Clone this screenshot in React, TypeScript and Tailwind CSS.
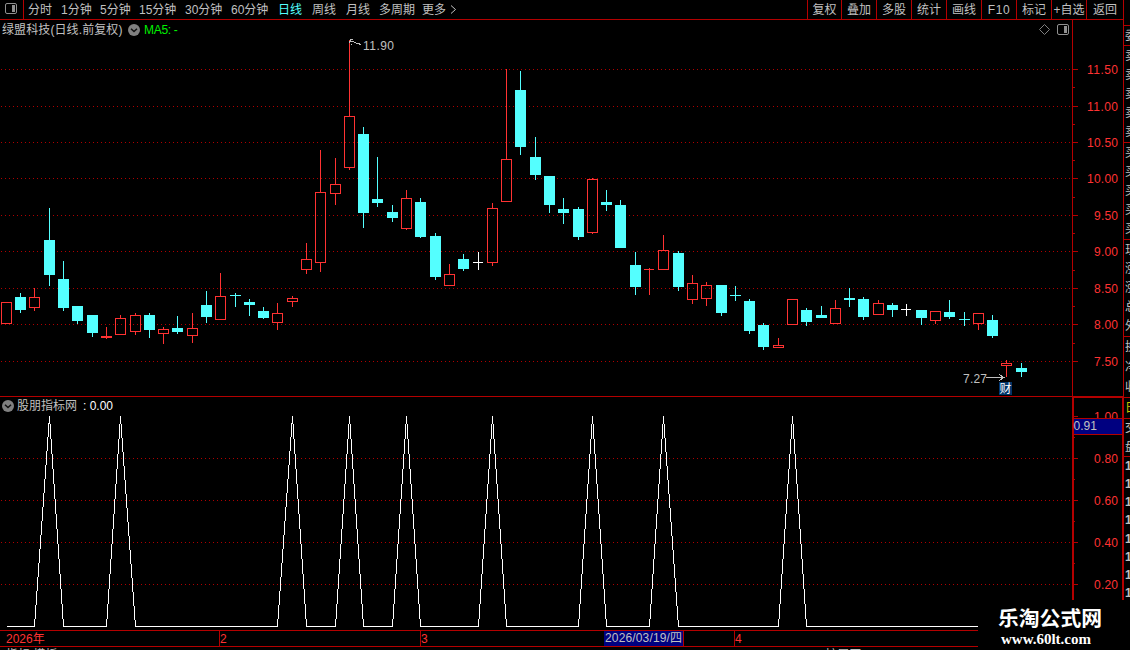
import React from "react";

type Kind = "r" | "c" | "w";
// kind, centre x, high, body top, body bottom, low
type Candle = [Kind, number, number, number, number, number];

const candles: Candle[] = [
  ["r", 6, 302, 302, 324, 324], ["c", 20, 293, 297, 310, 313], ["r", 34, 288, 297, 308, 311],
  ["c", 49, 208, 240, 275, 286], ["c", 63, 261, 279, 308, 311], ["c", 77, 306, 306, 321, 324],
  ["c", 92, 315, 315, 333, 337], ["r", 106, 327, 336, 338, 339], ["r", 120, 315, 318, 335, 335],
  ["r", 135, 313, 315, 332, 335], ["c", 149, 313, 315, 330, 338], ["r", 163, 327, 329, 334, 344],
  ["c", 177, 316, 328, 332, 334], ["r", 192, 313, 328, 336, 343], ["c", 206, 291, 305, 317, 323],
  ["r", 220, 273, 296, 320, 320], ["c", 235, 293, 295, 296, 307], ["c", 249, 299, 302, 305, 316],
  ["c", 263, 307, 311, 318, 319], ["r", 277, 303, 313, 323, 330], ["r", 292, 296, 298, 302, 307],
  ["r", 306, 243, 259, 270, 274], ["r", 320, 150, 192, 263, 272], ["r", 335, 158, 184, 194, 205],
  ["r", 349, 40, 116, 168, 170], ["c", 363, 127, 134, 213, 228], ["c", 377, 157, 199, 203, 207],
  ["c", 392, 205, 212, 218, 222], ["r", 406, 190, 198, 229, 230], ["c", 420, 198, 202, 237, 238],
  ["c", 435, 233, 236, 277, 280], ["r", 449, 264, 274, 286, 286], ["c", 463, 254, 259, 269, 271],
  ["w", 478, 252, 262, 263, 270], ["r", 492, 203, 208, 263, 266], ["r", 506, 69, 159, 202, 202],
  ["c", 520, 71, 90, 147, 155], ["c", 535, 137, 157, 175, 180], ["c", 549, 176, 176, 205, 213],
  ["c", 563, 198, 209, 213, 224], ["c", 578, 207, 209, 237, 240], ["r", 592, 178, 179, 233, 234],
  ["c", 606, 190, 202, 205, 211], ["c", 620, 200, 205, 248, 248], ["c", 635, 252, 265, 287, 295],
  ["r", 649, 268, 269, 270, 295], ["r", 663, 235, 250, 270, 270], ["c", 678, 251, 253, 287, 291],
  ["r", 692, 275, 283, 300, 304], ["r", 706, 282, 285, 299, 306], ["c", 721, 285, 285, 313, 316],
  ["c", 735, 286, 295, 296, 301], ["c", 749, 299, 301, 331, 334], ["c", 763, 323, 325, 347, 350],
  ["r", 778, 338, 345, 348, 348], ["r", 792, 299, 299, 325, 325], ["c", 806, 308, 310, 322, 326],
  ["c", 821, 306, 315, 318, 318], ["r", 835, 300, 308, 324, 324], ["c", 849, 288, 298, 300, 307],
  ["c", 863, 297, 299, 317, 320], ["r", 878, 300, 303, 315, 315], ["c", 892, 303, 305, 310, 317],
  ["w", 906, 304, 309, 310, 316], ["c", 921, 310, 310, 318, 325], ["r", 935, 311, 311, 321, 324],
  ["c", 949, 300, 312, 317, 319], ["c", 964, 312, 319, 320, 326], ["r", 978, 313, 313, 324, 330],
  ["c", 992, 315, 320, 336, 338], ["r", 1006, 360, 363, 366, 377], ["c", 1021, 363, 368, 372, 377],
];

const palette: Record<Kind, string> = { r: "#ff3232", c: "#54ffff", w: "#ffffff" };

const priceLevels: [number, string][] = [
  [69, "11.50"], [106, "11.00"], [142, "10.50"], [178, "10.00"], [215, "9.50"],
  [251, "9.00"], [288, "8.50"], [324, "8.00"], [361, "7.50"],
];
const signalLevels: [number, string][] = [[458, "0.80"], [500, "0.60"], [542, "0.40"], [584, "0.20"]];

const periods: [string, string][] = [
  ["分时", "w-[33px]"], ["1分钟", "w-[39px]"], ["5分钟", "w-[39px]"], ["15分钟", "w-[46px]"],
  ["30分钟", "w-[46px]"], ["60分钟", "w-[47px]"], ["日线", "w-[34px] text-[#54ffff]"], ["周线", "w-[34px]"],
  ["月线", "w-[33px]"], ["多周期", "w-[43px]"], ["更多", "w-[28px]"],
];
const tools: [string, string][] = [
  ["复权", "w-[34px]"], ["叠加", "w-[35px]"], ["多股", "w-[35px]"], ["统计", "w-[35px]"], ["画线", "w-[35px]"],
  ["F10", "w-[35px] tracking-[0.6px]"], ["标记", "w-[35px]"], ["+自选", "w-[35px]"], ["返回", "w-[37px]"],
];

const peaks = [3, 8, 20, 24, 28, 34, 41, 46, 55];
const signalPoints = candles
  .slice(0, 69)
  .map(([, x], i) => `${x + 0.5},${peaks.includes(i) ? 416.5 : 626.5}`)
  .join(" ");

function CandleShape({ data }: { data: Candle }) {
  const [kind, x, high, top, bottom, low] = data;
  const color = palette[kind];
  const thin = bottom - top <= 1;
  return (
    <g fill={color}>
      {top > high && <rect x={x} y={high} width={1} height={top - high} />}
      {low > bottom && <rect x={x} y={bottom} width={1} height={low - bottom} />}
      {kind === "r" && bottom - top > 2 ? (
        <rect x={x - 4.5} y={top + 0.5} width={10} height={bottom - top - 1} fill="none" stroke={color} />
      ) : (
        <rect x={x - 5} y={top} width={thin && kind !== "c" ? 10 : 11} height={bottom - top} />
      )}
    </g>
  );
}

function PanelIcon() {
  return (
    <svg width="12" height="11" viewBox="0 0 12 11" className="shrink-0">
      <rect x="0.5" y="0.5" width="11" height="10" rx="1.5" fill="none" stroke="#909090" />
      <rect x="7" y="2" width="3" height="7" fill="#909090" />
    </svg>
  );
}

function ChevronBadge() {
  return (
    <svg width="12" height="12" viewBox="0 0 12 12" className="shrink-0">
      <circle cx="6" cy="6" r="6" fill="#808080" />
      <path d="M3 4.7 L6 7.5 L9 4.7" fill="none" stroke="#101010" strokeWidth="1.5" />
    </svg>
  );
}

function PriceChart() {
  return (
    <svg width="1072" height="376" viewBox="0 20 1072 376" className="block" shapeRendering="crispEdges">
      {priceLevels.map(([y]) => (
        <line key={y} x1="1" x2="1072" y1={y + 0.5} y2={y + 0.5} stroke="#b00000" strokeDasharray="1 3" />
      ))}
      {candles.map((c) => <CandleShape key={c[1]} data={c} />)}
      <g fill="none" stroke="#c0c0c0">
        <path d="M353 39.5H350.5L349.5 43M349.5 41.5H353L356 43H358L361 45M351 44H352" />
        <path d="M986 377.5H1004M999 374.5L1004 377.5L999 380.5" />
      </g>
      <g fill="#c0c0c0" fontSize="12">
        <text x="363" y="50" textLength="31">11.90</text>
        <text x="963" y="383" textLength="24">7.27</text>
      </g>
      <rect x="999" y="382" width="13" height="13" fill="#003468" />
      <text x="999.5" y="393" fontSize="12" fill="#fff">财</text>
      <path d="M1044.5 24.5L1049.5 29.5L1044.5 34.5L1039.5 29.5Z" fill="none" stroke="#808080" shapeRendering="auto" />
    </svg>
  );
}

function SignalChart() {
  return (
    <svg width="1072" height="233" viewBox="0 397 1072 233" className="block" shapeRendering="crispEdges">
      {signalLevels.map(([y]) => (
        <line key={y} x1="1" x2="1072" y1={y + 0.5} y2={y + 0.5} stroke="#b00000" strokeDasharray="1 3" />
      ))}
      <polyline points={signalPoints} fill="none" stroke="#fff" />
    </svg>
  );
}

function ValueAxis() {
  return (
    <svg width="51" height="610" viewBox="1072 20 51 610" className="block" shapeRendering="crispEdges">
      <g fill="#b40000">
        <rect x="1072" y="20" width="1" height="610" />
        <rect x="1072" y="396" width="51" height="2" />
        <rect x="1072" y="396" width="2" height="234" />
        <rect x="1122" y="396" width="1" height="234" />
        {priceLevels.map(([y]) => <rect key={y} x="1073" y={y} width="5" height="1" />)}
        {[87, 124, 160, 197, 233, 270, 306, 343, 437, 479, 521, 563].map((y) => (
          <rect key={y} x="1073" y={y} width="2" height="1" />
        ))}
        {[416, 458, 500, 542, 584].map((y) => <rect key={y} x="1074" y={y} width="4" height="1" />)}
      </g>
      <g fill="#ff3232" fontSize="12" textAnchor="end">
        {[...priceLevels, [416, "1.00"] as [number, string], ...signalLevels].map(([y, label]) => (
          <text key={y} x="1118" y={y + 5} textLength={label.length === 5 ? 31 : 24}>{label}</text>
        ))}
      </g>
      <rect x="1074" y="418" width="48" height="17" fill="#b40000" />
      <rect x="1074" y="419" width="48" height="15" fill="#000080" />
      <text x="1073.5" y="430" fontSize="12" fill="#c0c0c0">0.91</text>
    </svg>
  );
}

const sideRows: [string[], string][] = [
  [["委"], "h-[20px] border-t"],
  [["卖", "卖", "卖", "卖", "卖"], "h-[97px] border-t"],
  [["买", "买", "买", "买", "买"], "h-[97px] border-t"],
  [["现", "涨", "涨", "总", "外"], "h-[97px] border-t"],
  [["换", "净", "收"], "h-[61px] border-t"],
  [["日"], "h-[21px] border-t text-[#c8c800]"],
  [["交", "盘"], "h-[38px] border-t"],
  [["1", "1", "1", "1", "1", "1", "1", "1"], "h-[146px] border-t font-bold"],
];

export default function App() {
  return (
    <div className="relative flex h-[650px] w-[1130px] overflow-hidden bg-black font-['Liberation_Sans','Noto_Sans_CJK_SC',sans-serif] text-[12px] leading-[14px] text-[#c0c0c0]">
      <div className="flex w-[1124px] shrink-0 flex-col">
        <header className="flex h-[20px] shrink-0 border-r border-b border-[#b40000] whitespace-nowrap">
          <div className="flex w-[24px] items-center border-r border-[#b40000] pb-[2px] pl-[5px]"><PanelIcon /></div>
          <nav className="flex items-center pt-[1px] pl-[4px]">
            {periods.map(([label, style]) => <span key={label} className={style}>{label}</span>)}
            <svg width="7" height="9" viewBox="0 0 7 9" className="mb-[2px]"><path d="M1 .5L5.5 4.5L1 8.5" fill="none" stroke="#c0c0c0" /></svg>
          </nav>
          <div className="ml-auto flex">
            {tools.map(([label, style]) => (
              <span key={label} className={`${style} flex items-center justify-center border-l border-[#b40000] pt-[1px]`}>{label}</span>
            ))}
          </div>
        </header>
        <div className="flex h-[610px] shrink-0 border-r border-[#b40000]">
          <main className="flex w-[1072px] shrink-0 flex-col">
            <section className="relative h-[376px]">
              <PriceChart />
              <div className="absolute top-0 left-0 flex h-[19px] w-full items-center whitespace-nowrap pr-[3px] pl-[2px]">
                <span className="w-[126px] tracking-[0.1px]">绿盟科技(日线.前复权)</span>
                <ChevronBadge />
                <span className="ml-[4px] tracking-[-0.3px] text-[#00f000]">MA5: -</span>
                <span className="ml-auto"><PanelIcon /></span>
              </div>
            </section>
            <section className="relative h-[234px] border-t border-[#b40000]">
              <SignalChart />
              <div className="absolute top-0 left-0 flex h-[17px] items-center whitespace-nowrap pl-[2px]">
                <ChevronBadge />
                <span className="ml-[3px] w-[66px]">股朋指标网</span>
                <span className="text-white">: 0.00</span>
              </div>
            </section>
          </main>
          <ValueAxis />
        </div>
        <footer className="flex h-[17px] shrink-0 border-y border-[#b40000] text-[#ff3232]">
          <span className="w-[219px] pt-[1px] pl-[6px]">2026年</span>
          <span className="w-[201px] border-l border-[#b40000] pt-[1px]">2</span>
          <span className="w-[184px] border-l border-[#b40000] pt-[1px]">3</span>
          <span className="w-[79px] bg-[#000080] pl-[1px] tracking-[0.15px] whitespace-nowrap text-[#c0c0c0]">2026/03/19/四</span>
          <span className="w-[51px] border-l border-[#b40000]" />
          <span className="border-l border-[#b40000] pt-[1px]">4</span>
        </footer>
        <div className="flex h-[3px] shrink-0 overflow-hidden pt-[1px]">
          <span className="pl-[6px]">指标 模板</span>
          <span className="ml-[768px]">扩展区</span>
        </div>
      </div>
      <aside className="flex w-[6px] shrink-0 flex-col overflow-hidden pt-[25px]">
        {sideRows.map(([rows, style], i) => (
          <div key={i} className={`${style} flex shrink-0 flex-col justify-around overflow-hidden border-[#b40000] pl-[1px]`}>
            {rows.map((row, j) => <span key={j}>{row}</span>)}
          </div>
        ))}
      </aside>
      <div className="absolute right-0 bottom-0 flex h-[50px] w-[152px] flex-col bg-black pt-[8px] whitespace-nowrap text-white">
        <span className="pl-[20px] text-[20.8px] leading-[22px] font-bold">乐淘公式网</span>
        <span className="pl-[23px] font-['Liberation_Serif',serif] text-[15px] leading-[18px] font-bold">www.60lt.com</span>
      </div>
    </div>
  );
}
